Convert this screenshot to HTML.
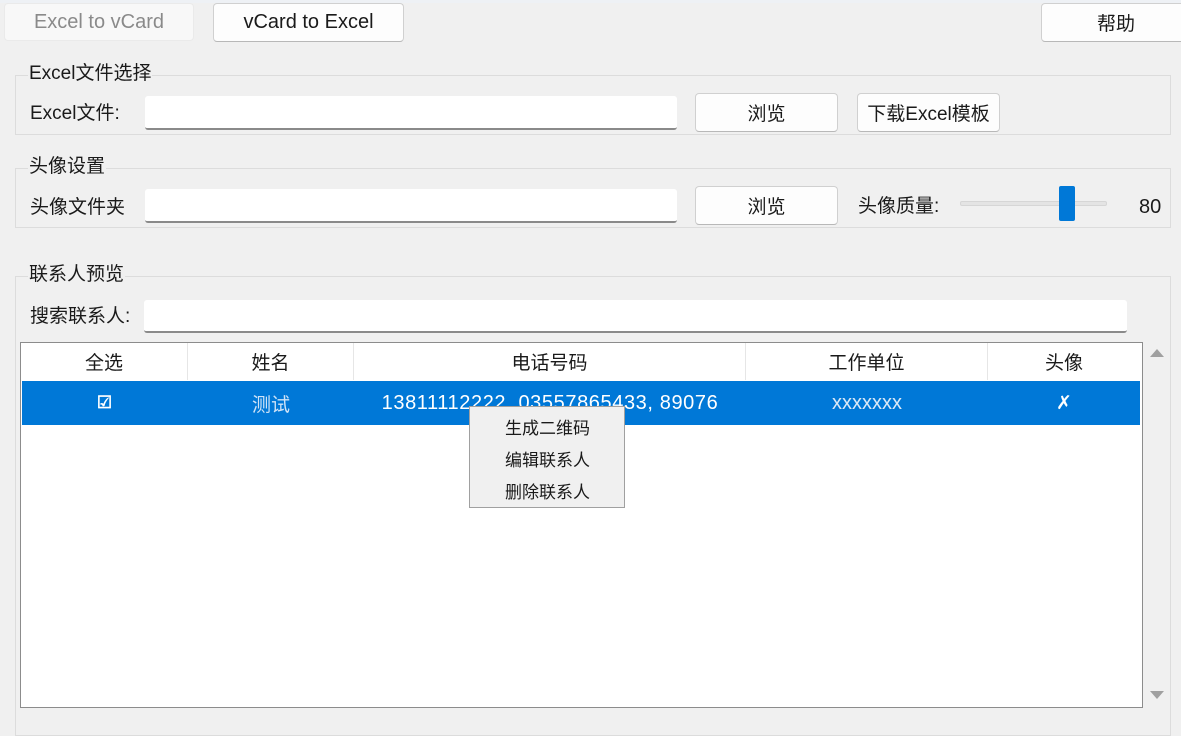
<!DOCTYPE html><html><head><meta charset="utf-8"><style>
body{margin:0;width:1181px;height:724px;background:#f0f0f0;position:relative;overflow:hidden;font-family:"Liberation Sans","Noto Sans CJK SC",sans-serif;font-size:19px;color:#1a1a1a}
div{position:absolute;box-sizing:border-box}
.btn{background:#fdfdfd;border:1px solid #d0d0d0;border-bottom-color:#b8b8b8;border-radius:4px;display:flex;align-items:center;justify-content:center}
.grp{border:1px solid #dcdcdc}
.gt{background:#f0f0f0;padding:0 1px;line-height:20px}
.inp{background:#fff;border-bottom:2px solid #8a8a8a;border-radius:3px}
.lbl{line-height:20px}
.th{top:343px;height:37px;display:flex;align-items:center;justify-content:center;border-right:1px solid #e6e6e6}
.td{top:381px;height:44px;display:flex;align-items:center;justify-content:center;color:#fff}
</style></head><body>
<div style="left:0;top:0;width:1181px;height:3px;background:#eef1f5"></div>
<div class="btn" style="left:4px;top:3px;width:190px;height:38px;background:#f8f8f8;border-color:#eaeaea;color:#8a8a8a;font-size:20px">Excel to vCard</div>
<div class="btn" style="left:213px;top:3px;width:191px;height:39px;font-size:20px">vCard to Excel</div>
<div class="btn" style="left:1041px;top:3px;width:150px;height:39px">帮助</div>

<div class="grp" style="left:15px;top:75px;width:1156px;height:60px"></div>
<div class="gt lbl" style="left:28px;top:64px">Excel文件选择</div>
<div class="lbl" style="left:30px;top:104px">Excel文件:</div>
<div class="inp" style="left:145px;top:96px;width:532px;height:34px"></div>
<div class="btn" style="left:695px;top:93px;width:143px;height:39px">浏览</div>
<div class="btn" style="left:857px;top:93px;width:143px;height:39px">下载Excel模板</div>

<div class="grp" style="left:15px;top:168px;width:1156px;height:60px"></div>
<div class="gt lbl" style="left:28px;top:157px">头像设置</div>
<div class="lbl" style="left:30px;top:198px">头像文件夹</div>
<div class="inp" style="left:145px;top:189px;width:532px;height:34px"></div>
<div class="btn" style="left:695px;top:186px;width:143px;height:39px">浏览</div>
<div class="lbl" style="left:858px;top:197px">头像质量:</div>
<div style="left:960px;top:201px;width:147px;height:5px;background:#e4e4e4;border:1px solid #d6d6d6;border-radius:2px"></div>
<div style="left:1059px;top:186px;width:16px;height:35px;background:#0078d7;border-radius:2px"></div>
<div class="lbl" style="left:1139px;top:197px;font-size:20px">80</div>

<div class="grp" style="left:15px;top:276px;width:1156px;height:460px"></div>
<div class="gt lbl" style="left:28px;top:265px">联系人预览</div>
<div class="lbl" style="left:30px;top:307px">搜索联系人:</div>
<div class="inp" style="left:144px;top:300px;width:983px;height:33px"></div>

<div style="left:20px;top:342px;width:1123px;height:366px;background:#fff;border:1px solid #8c8c8c"></div>
<div class="th" style="left:21px;width:167px">全选</div>
<div class="th" style="left:188px;width:166px">姓名</div>
<div class="th" style="left:354px;width:392px">电话号码</div>
<div class="th" style="left:746px;width:242px">工作单位</div>
<div class="th" style="left:988px;width:152px;border-right:none">头像</div>
<div style="left:22px;top:381px;width:1118px;height:44px;background:#0078d7"></div>
<div class="td" style="left:21px;width:167px;font-size:17px;font-weight:bold">☑</div>
<div class="td" style="left:188px;width:166px;color:#cfe3f7">测试</div>
<div class="td" style="left:354px;width:392px;font-size:20px;letter-spacing:0.6px">13811112222, 03557865433, 89076</div>
<div class="td" style="left:746px;width:242px;color:#dbe9f7;font-size:20px">xxxxxxx</div>
<div class="td" style="left:988px;width:152px">✗</div>

<div style="left:1150px;top:349px;width:0;height:0;border-left:7px solid transparent;border-right:7px solid transparent;border-bottom:8px solid #a0a0a0"></div>
<div style="left:1150px;top:691px;width:0;height:0;border-left:7px solid transparent;border-right:7px solid transparent;border-top:8px solid #a0a0a0"></div>

<div style="left:469px;top:406px;width:156px;height:102px;background:#f0f0f0;border:1px solid #a0a0a0;font-size:17px">
<div style="left:35px;top:7px">生成二维码</div>
<div style="left:35px;top:39px">编辑联系人</div>
<div style="left:35px;top:71px">删除联系人</div>
</div>
</body></html>
